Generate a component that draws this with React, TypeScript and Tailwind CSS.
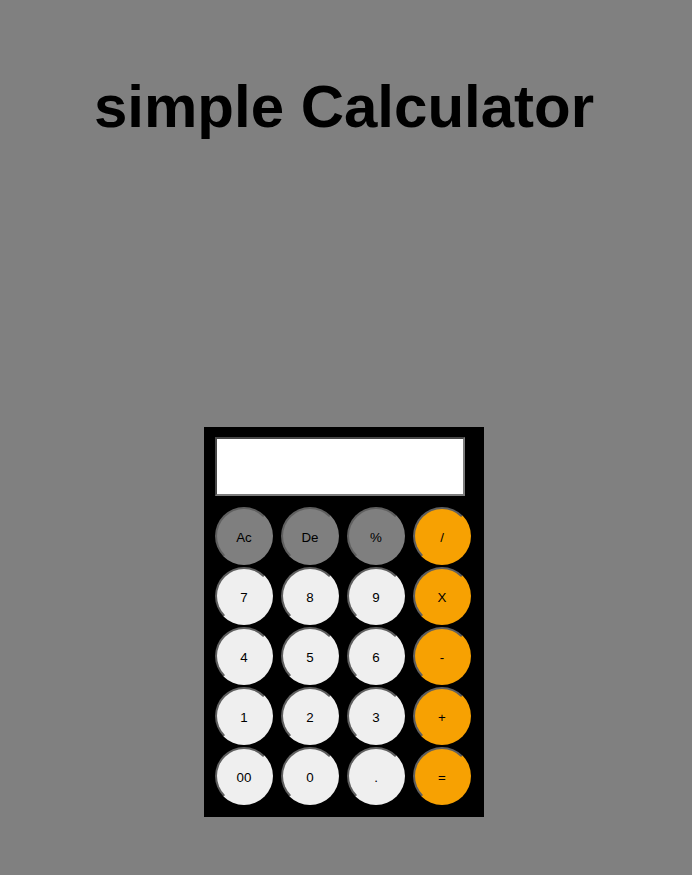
const keys = [
  { label: 'Ac', kind: 'fn' },
  { label: 'De', kind: 'fn' },
  { label: '%', kind: 'fn' },
  { label: '/', kind: 'op' },
  { label: '7', kind: 'num' },
  { label: '8', kind: 'num' },
  { label: '9', kind: 'num' },
  { label: 'X', kind: 'op' },
  { label: '4', kind: 'num' },
  { label: '5', kind: 'num' },
  { label: '6', kind: 'num' },
  { label: '-', kind: 'op' },
  { label: '1', kind: 'num' },
  { label: '2', kind: 'num' },
  { label: '3', kind: 'num' },
  { label: '+', kind: 'op' },
  { label: '00', kind: 'num' },
  { label: '0', kind: 'num' },
  { label: '.', kind: 'num' },
  { label: '=', kind: 'op' },
];

const faces: Record<string, string> = {
  fn: 'bg-[#7f7f7f]',
  num: 'bg-[#efefef]',
  op: 'bg-[#f7a102]',
};

const App = () => {
  return (
    <div className="min-h-screen bg-[#808080] font-['Liberation_Sans',Arial,sans-serif] text-black">
      <div className="flex flex-col items-center pr-1">
        {/* Title */}
        <h1 className="mt-[72px] text-[60px] leading-[69px] font-bold">simple Calculator</h1>

        {/* Calculator body */}
        <div className="mt-[286px] w-[280px] bg-black pl-[11px] pt-[10px] pb-[12px]">
          <input
            type="text"
            className="block h-[59px] w-[250px] border-2 border-t-[#484848] border-l-[#484848] border-r-[#7c7c7c] border-b-[#7c7c7c] bg-white outline-none"
          />
          <div className="mt-[11px] grid grid-cols-[repeat(4,58px)] gap-x-[8px] gap-y-[2px]">
            {keys.map((k) => (
              <button
                key={k.label}
                className={`flex h-[58px] w-[58px] items-center justify-center rounded-full border-2 border-[#5f5f5f] border-r-transparent border-b-transparent pt-[3px] text-[13.33px] text-black ${faces[k.kind]}`}
              >
                {k.label}
              </button>
            ))}
          </div>
        </div>
      </div>
    </div>
  );
};

export default App;
